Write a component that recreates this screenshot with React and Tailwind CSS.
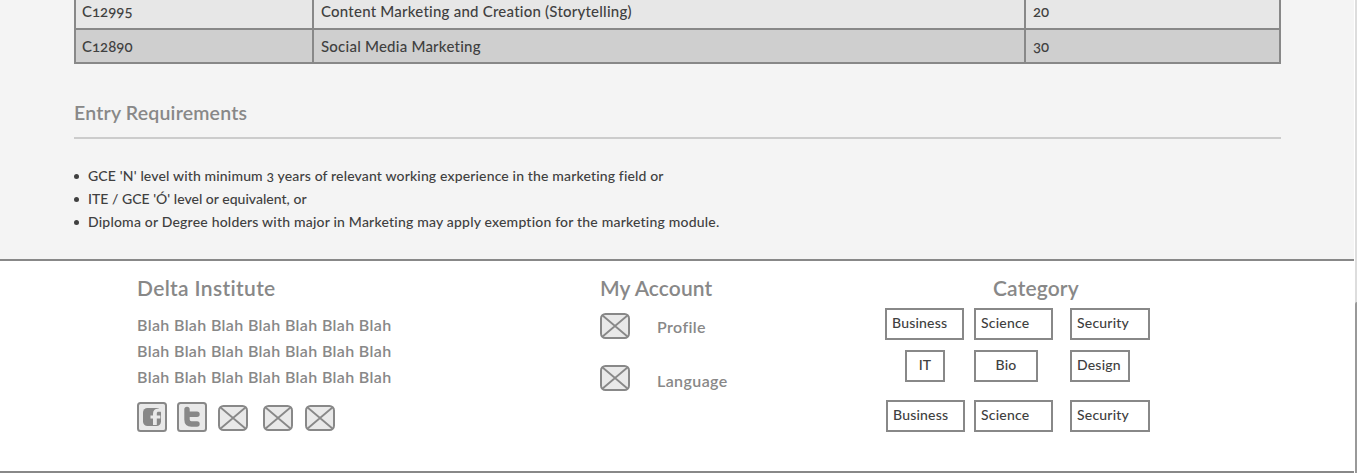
import React from "react";

const courses = [
  { code: "C12995", title: "Content Marketing and Creation (Storytelling)", hours: "20", tone: "bg-[#e7e7e7]", height: "h-7 pb-[7px]" },
  { code: "C12890", title: "Social Media Marketing", hours: "30", tone: "bg-[#cfcfcf]", height: "h-8 pb-px" },
];

const requirements = [
  { text: "GCE 'N' level with minimum 3 years of relevant working experience in the marketing field or", spacing: "tracking-[0.15px]" },
  { text: "ITE / GCE 'Ó' level or equivalent, or", spacing: "tracking-[0.02px]" },
  { text: "Diploma or Degree holders with major in Marketing may apply exemption for the marketing module.", spacing: "tracking-[0.2px]" },
];

function CrossBox({ className = "" }) {
  return (
    <svg className={`h-[26px] w-[30px] shrink-0 ${className}`} viewBox="0 0 30 26" fill="none" stroke="#888" strokeWidth="2">
      <rect x="1" y="1" width="28" height="24" rx="4.5" fill="#e9e9e9" />
      <path d="M2 2 28 24M28 2 2 24" strokeWidth="1.8" />
    </svg>
  );
}

function FacebookBox() {
  return (
    <svg className="h-[30px] w-[30px] shrink-0" viewBox="0 0 30 30">
      <rect x="1" y="1" width="28" height="28" rx="2.5" fill="#e9e9e9" stroke="#888" strokeWidth="2" />
      <rect x="6" y="6" width="18" height="18" rx="4.5" fill="#888" />
      <path d="M16 23v-6.5h-2.5v-3H16v-1.8C16 8.4 17.8 6.7 21 6.7h3v3h-2.4c-1.3 0-1.8.6-1.8 1.8v2h3.5v3h-3.5V23z" fill="#e9e9e9" />
    </svg>
  );
}

function TwitterBox() {
  return (
    <svg className="h-[30px] w-[30px] shrink-0" viewBox="0 0 30 30">
      <rect x="1" y="1" width="28" height="28" rx="2.5" fill="#e9e9e9" stroke="#888" strokeWidth="2" />
      <path d="M10 7.5V17.5Q10 22 14.5 22H20M10 12.3H20" fill="none" stroke="#888" strokeWidth="5.4" strokeLinecap="round" />
    </svg>
  );
}

function Tag({ children, className }) {
  return (
    <div className={`flex h-8 shrink-0 items-center border-2 border-[#888] pb-0.5 text-sm tracking-[0.2px] text-[#404040] ${className}`}>
      {children}
    </div>
  );
}

export default function App() {
  return (
    <div className="flex h-[473px] w-[1357px] overflow-hidden bg-white font-['Lato',sans-serif] font-medium text-[#404040] [font-variant-numeric:oldstyle-nums]">
      <div className="flex w-[1354px] flex-col">
        <main className="h-[261px] border-b-2 border-[#888] bg-[#f4f4f4] pl-[74px]">
          <div className="flex w-[1207px] flex-col gap-0.5 border-x-2 border-b-2 border-[#888] bg-[#888]">
            {courses.map((c) => (
              <div key={c.code} className="grid grid-cols-[236px_710px_253px] gap-0.5 text-[15px] leading-5">
                <div className={`flex items-center pl-1.5 ${c.tone} ${c.height}`}>{c.code}</div>
                <div className={`flex items-center pl-[7px] tracking-[0.23px] ${c.tone} ${c.height}`}>{c.title}</div>
                <div className={`flex items-center pl-[7px] ${c.tone} ${c.height}`}>{c.hours}</div>
              </div>
            ))}
          </div>
          <h2 className="mt-[37px] h-[38px] w-[1207px] border-b-2 border-[#ccc] text-[19.5px] leading-6 font-semibold tracking-[0.19px] text-[#888]">
            Entry Requirements
          </h2>
          <ul className="mt-[25px] text-sm leading-[23px]">
            {requirements.map((r) => (
              <li key={r.text} className={`flex items-center ${r.spacing}`}>
                <span className="mt-px mr-[9px] size-[5px] rounded-full bg-[#404040]" />
                {r.text}
              </li>
            ))}
          </ul>
        </main>
        <footer className="flex h-[212px] border-b-2 border-[#888] pt-[15px] pl-[137px] text-base font-semibold text-[#888]">
          <section className="w-[463px]">
            <h3 className="text-[21px] leading-6 tracking-[0.34px]">Delta Institute</h3>
            <div className="mt-3 leading-[26px] tracking-[0.36px]">
              <p>Blah Blah Blah Blah Blah Blah Blah</p>
              <p>Blah Blah Blah Blah Blah Blah Blah</p>
              <p>Blah Blah Blah Blah Blah Blah Blah</p>
            </div>
            <div className="mt-3 flex items-center">
              <FacebookBox />
              <span className="w-2.5" />
              <TwitterBox />
              <CrossBox className="mt-0.5 ml-[11px]" />
              <CrossBox className="mt-0.5 ml-[15px]" />
              <CrossBox className="mt-0.5 ml-3" />
            </div>
          </section>
          <section className="w-[285px]">
            <h3 className="text-[21px] leading-6 tracking-[0.08px]">My Account</h3>
            <div className="mt-[13px] flex items-start gap-[27px] leading-[26px] tracking-[0.4px]">
              <CrossBox />
              <span className="pt-px">Profile</span>
            </div>
            <div className="mt-[25px] flex items-start gap-[27px] leading-[26px] tracking-[0.4px]">
              <CrossBox />
              <span className="pt-[3px]">Language</span>
            </div>
          </section>
          <section className="w-[266px] font-medium">
            <h3 className="pl-[108px] text-[21px] leading-6 font-semibold tracking-[0.15px]">Category</h3>
            <div className="mt-2 flex">
              <Tag className="w-[79px] pl-[5px]">Business</Tag>
              <Tag className="ml-2.5 w-[79px] pl-[5px]">Science</Tag>
              <Tag className="ml-[17px] w-20 pl-[5px]">Security</Tag>
            </div>
            <div className="mt-2.5 flex pl-5">
              <Tag className="w-10 justify-center">IT</Tag>
              <Tag className="ml-[29px] w-16 justify-center">Bio</Tag>
              <Tag className="ml-8 w-[60px] pl-[5px]">Design</Tag>
            </div>
            <div className="mt-[18px] flex pl-px">
              <Tag className="w-[79px] pl-[5px]">Business</Tag>
              <Tag className="ml-[9px] w-[79px] pl-[5px]">Science</Tag>
              <Tag className="ml-[17px] w-20 pl-[5px]">Security</Tag>
            </div>
          </section>
        </footer>
      </div>
      <div className="ml-px flex w-0.5 flex-col justify-end bg-[#ddd]">
        <div className="h-[171px] rounded-tl-sm bg-[#999]" />
      </div>
    </div>
  );
}
